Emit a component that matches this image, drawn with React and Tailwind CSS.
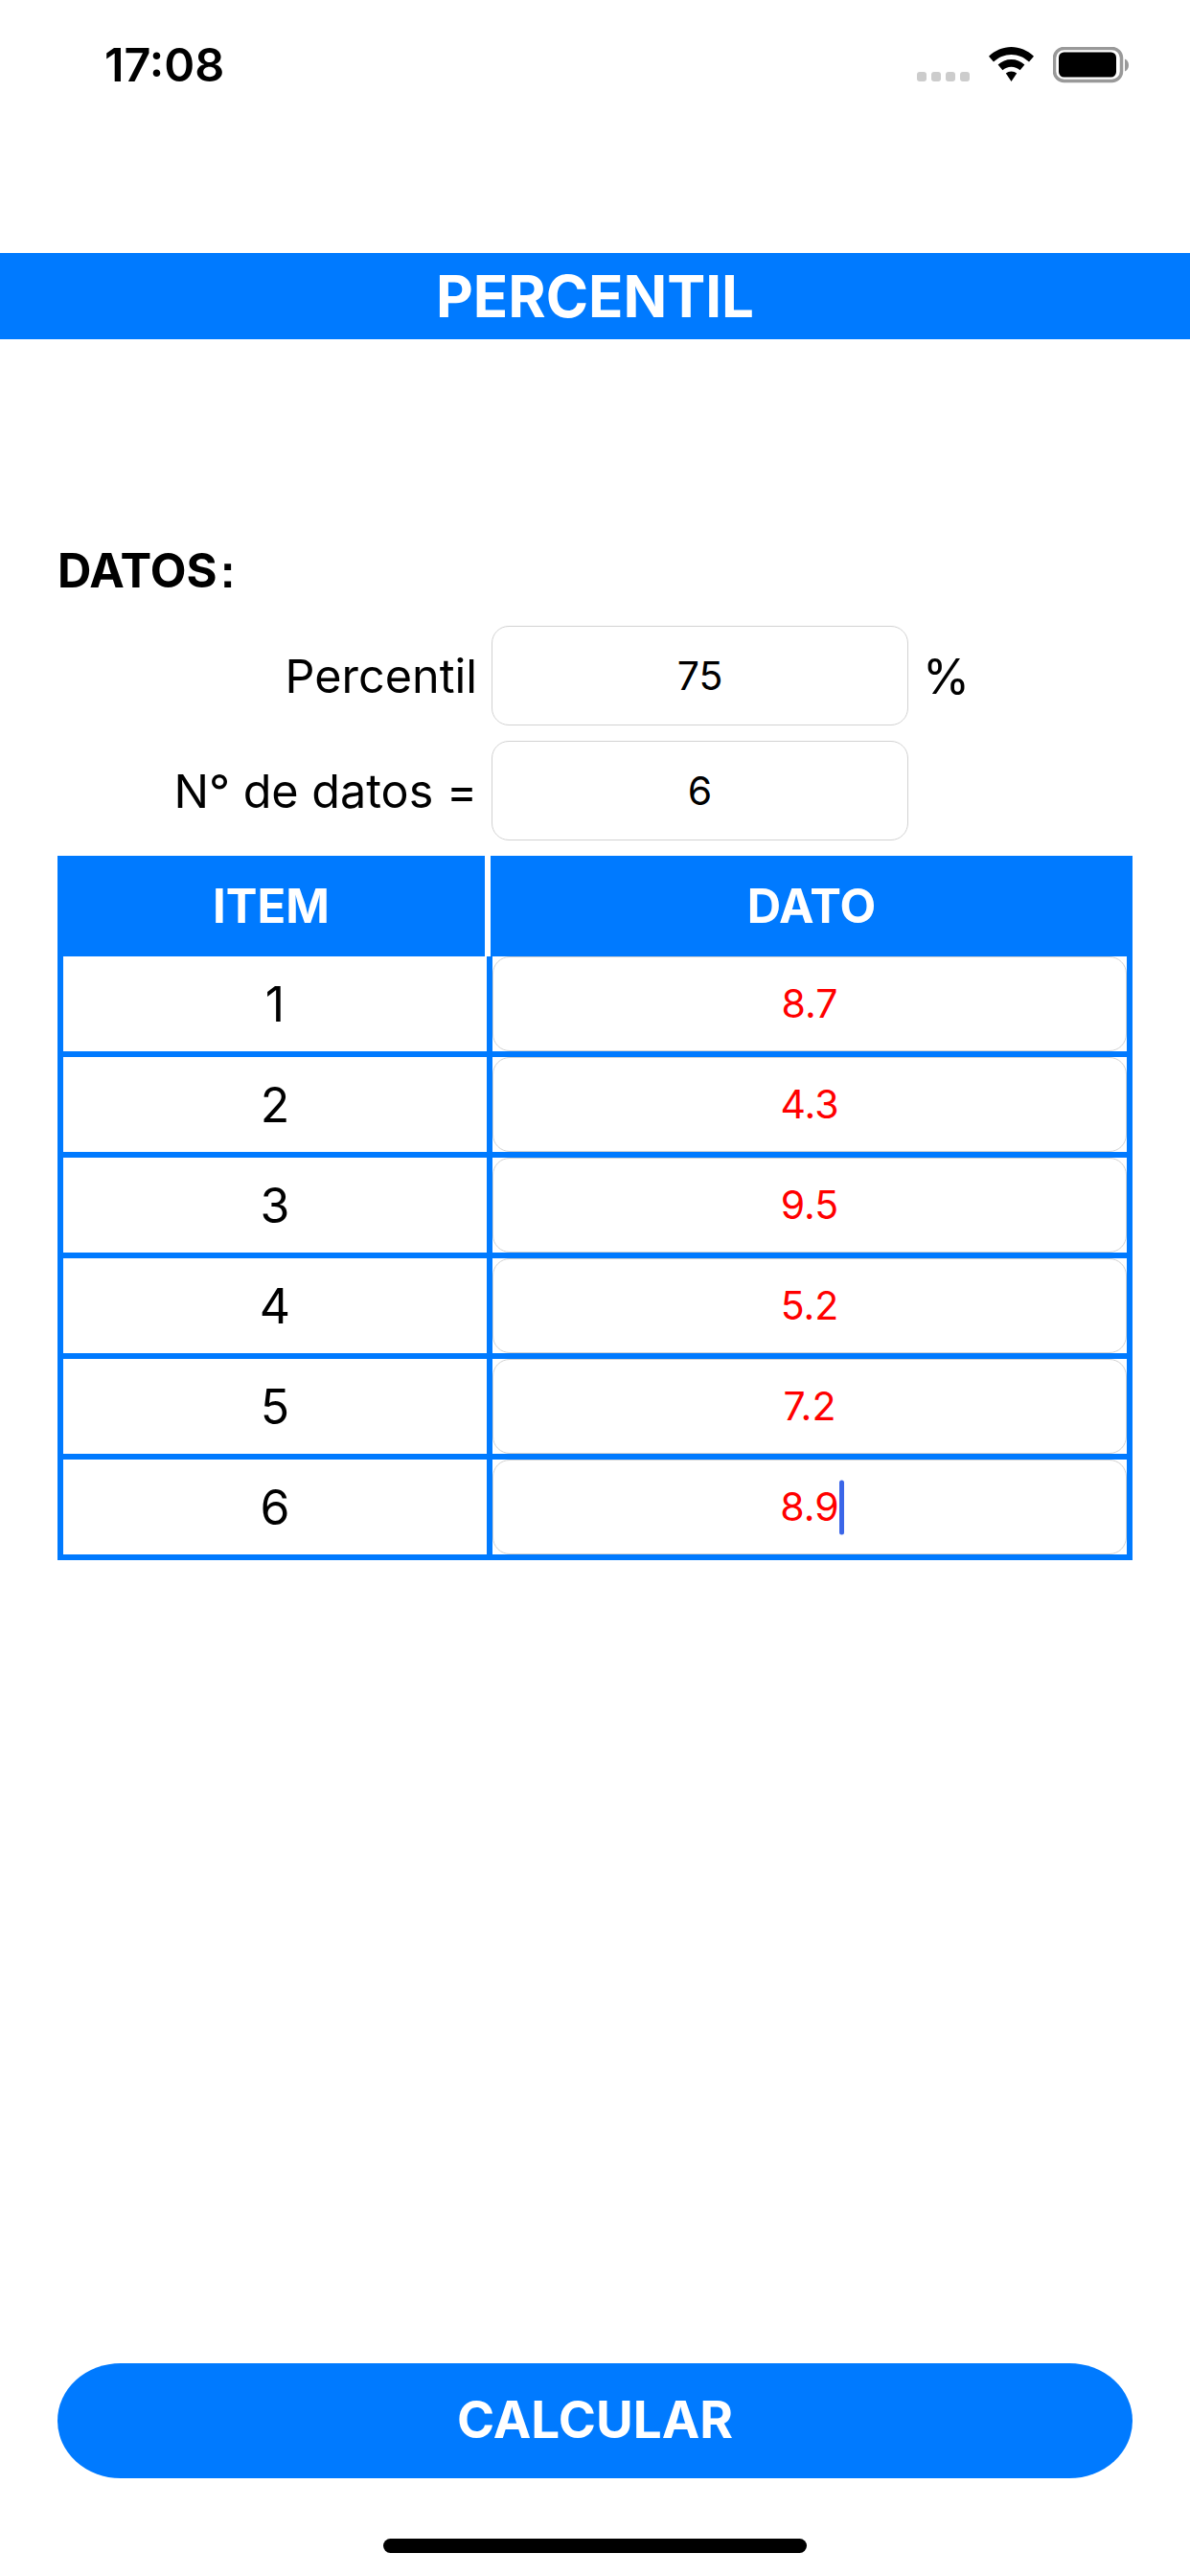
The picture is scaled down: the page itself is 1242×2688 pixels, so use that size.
const rows = [
  { item: "1", dato: "8.7" },
  { item: "2", dato: "4.3" },
  { item: "3", dato: "9.5" },
  { item: "4", dato: "5.2" },
  { item: "5", dato: "7.2" },
  { item: "6", dato: "8.9", focused: true },
];

function Wifi() {
  return (
    <svg width="47" height="36" viewBox="0 0 47 36" className="block mb-[2px]">
      <path d="M23.5 0C32 0 40.5 3.4 47 9.8L42 15.6C37 10.8 30.5 8 23.5 8C16.5 8 10 10.8 5 15.6L0 9.8C6.5 3.4 15 0 23.5 0Z" fill="#000" />
      <path d="M23.5 13C28.8 13 33.6 15 37.4 18.6L32.6 24.2C30 21.9 27 20.7 23.5 20.7C20 20.7 17 21.9 14.4 24.2L9.6 18.6C13.4 15 18.2 13 23.5 13Z" fill="#000" />
      <path d="M23.5 25.4C25.6 25.4 27.6 26.2 29.2 27.6L23.5 36L17.8 27.6C19.4 26.2 21.4 25.4 23.5 25.4Z" fill="#000" />
    </svg>
  );
}

function Battery() {
  return (
    <svg width="80" height="38" viewBox="0 0 80 38" className="block">
      <rect x="1.5" y="1.5" width="70" height="34" rx="10" fill="none" stroke="#999" strokeWidth="3.5" />
      <rect x="6" y="5.5" width="60" height="26" rx="5.5" fill="#000" />
      <path d="M75 12.5C77.5 13.5 79 16 79 19C79 22 77.5 24.5 75 25.5Z" fill="#999" />
    </svg>
  );
}

function Field({ children, className }) {
  return (
    <div className={`flex items-center justify-center bg-white border-[1.5px] border-[#d2d2d2] rounded-[18px] text-[41px] ${className}`}>
      {children}
    </div>
  );
}

export default function App() {
  return (
    <div className="relative flex flex-col w-[1242px] h-[2688px] bg-white text-black font-['Inter',sans-serif]">
      {/* status bar */}
      <div className="flex justify-between items-start h-[264px] pt-[49px] pl-[109px] pr-[63px]">
        <span className="text-[48.5px] leading-[38px] font-semibold">17:08</span>
        <div className="flex items-end">
          <div className="flex gap-[5px] mr-[20px] mb-[2px]">
            <span className="w-[10px] h-[10px] rounded-[3px] bg-[#ccc]" />
            <span className="w-[10px] h-[10px] rounded-[3px] bg-[#ccc]" />
            <span className="w-[10px] h-[10px] rounded-[3px] bg-[#ccc]" />
            <span className="w-[10px] h-[10px] rounded-[3px] bg-[#ccc]" />
          </div>
          <Wifi />
          <div className="ml-[20px]">
            <Battery />
          </div>
        </div>
      </div>

      <div className="flex items-center justify-center h-[90px] bg-[#007aff] text-white text-[60px] font-bold">
        PERCENTIL
      </div>

      <div className="mt-[213px] px-[60px]">
        <h2 className="text-[49px] leading-[58px] font-bold">
          DATOS<span className="ml-[3px] font-['Liberation_Sans',sans-serif]">:</span>
        </h2>

        <div className="flex items-center mt-[28px] h-[104px]">
          <span className="w-[438px] pt-[2px] text-right text-[48.5px]">Percentil</span>
          <Field className="ml-[15px] w-[435px] h-[104px] pt-[2px]">75</Field>
          <span className="ml-[15px] pt-[2px] text-[50px]">%</span>
        </div>
        <div className="flex items-center mt-[16px] h-[104px]">
          <span className="w-[438px] pt-[2px] text-right text-[48.5px]">N° de datos =</span>
          <Field className="ml-[15px] w-[435px] h-[104px] pt-[2px]">6</Field>
        </div>

        <div className="mt-[16px]">
          <div className="flex h-[105px] text-white text-[49px] font-bold">
            <div className="flex items-center justify-center w-[446px] bg-[#007aff]">ITEM</div>
            <div className="flex items-center justify-center flex-1 ml-[6px] bg-[#007aff]">DATO</div>
          </div>
          {rows.map((row) => (
            <div key={row.item} className="flex h-[105px] border-x-[6px] border-b-[6px] border-[#007aff]">
              <div className="flex items-center justify-center w-[442px] pt-[2px] text-[50px]">{row.item}</div>
              <div className="w-[6px] bg-[#007aff]" />
              <Field className="flex-1 text-[#ff0000]">
                <span className="relative">
                  {row.dato}
                  {row.focused && (
                    <span className="absolute left-full top-1/2 -translate-y-1/2 w-[5px] h-[57px] rounded-full bg-[#3b66e8]" />
                  )}
                </span>
              </Field>
            </div>
          ))}
        </div>
      </div>

      <div className="mt-auto px-[60px] pb-[24px] flex flex-col items-center">
        <button className="w-full h-[120px] rounded-[66px/60px] bg-[#007aff] text-white text-[53px] font-bold">
          CALCULAR
        </button>
        <div className="mt-[63px] w-[442px] h-[15px] rounded-full bg-black" />
      </div>
    </div>
  );
}
